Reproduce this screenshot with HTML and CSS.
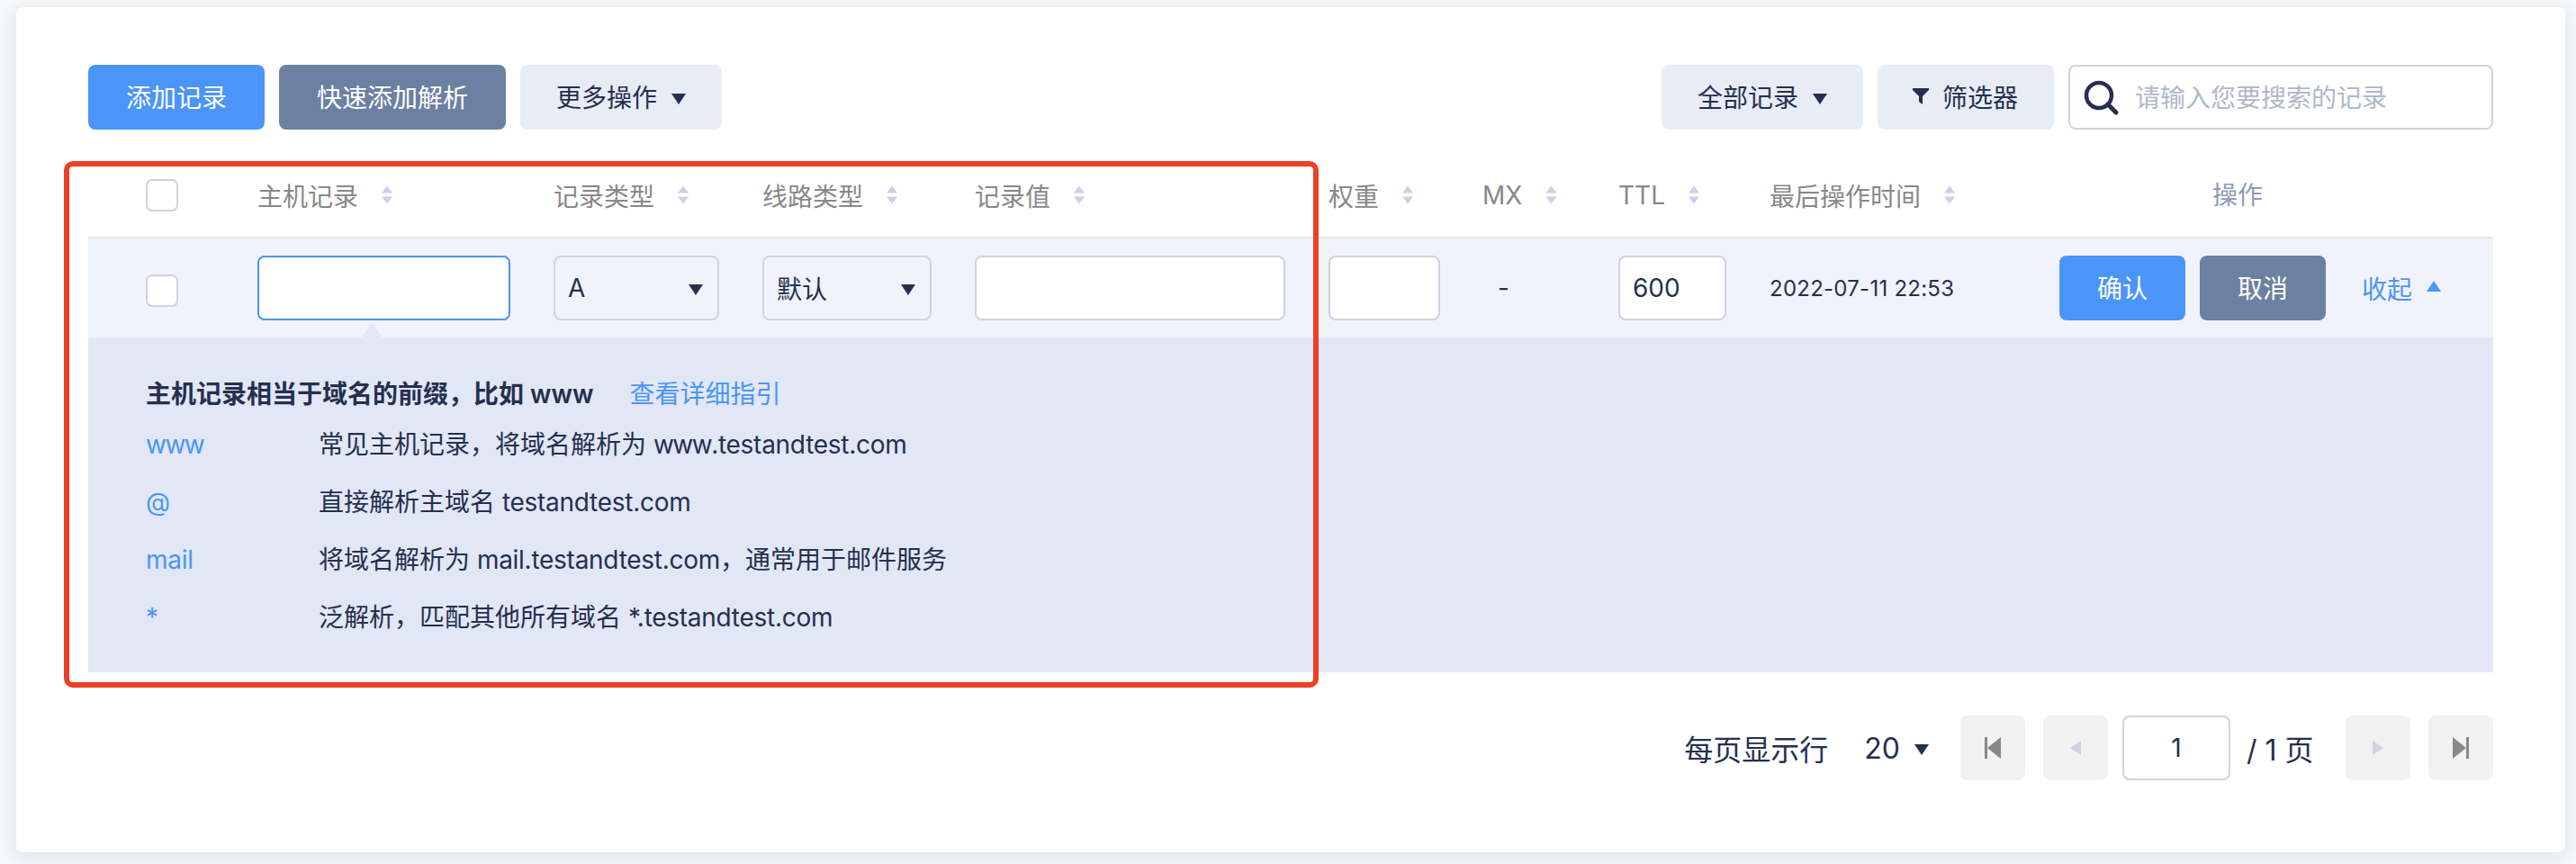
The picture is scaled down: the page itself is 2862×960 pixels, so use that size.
FILE: index.html
```
<!DOCTYPE html>
<html lang="zh-CN">
<head>
    <meta charset="UTF-8">
    <title>域名解析</title>
    <link rel="stylesheet" href="styles.css">
</head>
<body>
	<div class="card">
		<div class="toolbar">
			<button class="btn btn-primary">添加记录</button>
			<button class="btn btn-dark">快速添加解析</button>
			<button class="btn btn-light">更多操作<i class="caret"></i></button>
			<div class="toolbar-right">
				<button class="btn btn-light">全部记录<i class="caret"></i></button>
				<button class="btn btn-light btn-filter">
					<svg class="icon-filter" width="20" height="20" viewBox="0 0 20 20"><path d="M1 1h18v2l-7 7v9l-4-3v-6L1 3z" fill="#252f4f"/></svg>
					筛选器
				</button>
				<div class="search">
					<svg width="40" height="40" viewBox="0 0 40 40" fill="none" stroke="#252f4f">
						<circle cx="17" cy="17" r="14" stroke-width="4.5"/>
						<path d="M27 27l9 9" stroke-width="5" stroke-linecap="round"/>
					</svg>
					<input class="search-input" type="text" placeholder="请输入您要搜索的记录">
				</div>
			</div>
		</div>

		<div class="records">
			<div class="row row-head">
				<div><span class="checkbox"></span></div>
				<div>主机记录<i class="sort"></i></div>
				<div>记录类型<i class="sort"></i></div>
				<div>线路类型<i class="sort"></i></div>
				<div>记录值<i class="sort"></i></div>
				<div>权重<i class="sort"></i></div>
				<div>MX<i class="sort"></i></div>
				<div>TTL<i class="sort"></i></div>
				<div>最后操作时间<i class="sort"></i></div>
				<div class="head-actions">操作</div>
			</div>
			<div class="row row-edit">
				<div><span class="checkbox"></span></div>
				<div class="host-cell"><input class="field field-host" type="text"></div>
				<div><div class="field select select-type">A<i class="caret"></i></div></div>
				<div><div class="field select select-line">默认<i class="caret"></i></div></div>
				<div><input class="field field-value" type="text"></div>
				<div><input class="field field-weight" type="text"></div>
				<div class="mx">-</div>
				<div><input class="field field-ttl" type="text" value="600"></div>
				<div class="time">2022-07-11 22:53</div>
				<div class="actions">
					<button class="btn btn-primary">确认</button>
					<button class="btn btn-dark">取消</button>
					<a class="link collapse">收起<i class="caret caret-up"></i></a>
				</div>
			</div>
			<div class="guide">
				<div class="guide-title"><b>主机记录相当于域名的前缀，比如 www</b><a class="link">查看详细指引</a></div>
				<div class="guide-item"><a class="link www">www</a><span>常见主机记录，将域名解析为 <span class="www">www</span><span class="domain">.testandtest.com</span></span></div>
				<div class="guide-item"><a class="link">@</a><span>直接解析主域名 <span class="domain">testandtest.com</span></span></div>
				<div class="guide-item"><a class="link domain">mail</a><span>将域名解析为 <span class="domain">mail.testandtest.com</span>，通常用于邮件服务</span></div>
				<div class="guide-item"><a class="link">*</a><span>泛解析，匹配其他所有域名 <span class="domain">*.testandtest.com</span></span></div>
			</div>
			<div class="highlight"></div>
		</div>

		<div class="pager">
			<span class="page-label">每页显示行</span>
			<span class="page-size">20<i class="caret"></i></span>
			<button class="page-btn"><svg width="20" height="24" viewBox="0 0 20 24" fill="#888"><path d="M1 0h3v24H1zM19 0v24L4 12z"/></svg></button>
			<button class="page-btn"><svg width="12" height="16" viewBox="0 0 12 16" fill="#cfd3df"><path d="M12 0v16L0 8z"/></svg></button>
			<input class="field page-input" type="text" value="1">
			<span class="page-total">/ 1 页</span>
			<button class="page-btn"><svg width="12" height="16" viewBox="0 0 12 16" fill="#cfd3df"><path d="M0 0v16l12-8z"/></svg></button>
			<button class="page-btn"><svg width="20" height="24" viewBox="0 0 20 24" fill="#888"><path d="M16 0h3v24h-3zM1 0v24l15-12z"/></svg></button>
		</div>
	</div>
</body>
</html>
```
FILE: styles.css
```
* {
	box-sizing: border-box;
}

body {
	margin: 0;
	padding: 8px 12px 0 18px;
	height: 960px;
	overflow: hidden;
	background: #f6f8fa;
	color: #252f4f;
	font-family: Inter, "Noto Sans CJK SC", sans-serif;
	font-size: 28px;
}

button, input {
	font: inherit;
	color: inherit;
	outline: none;
}

.card {
	height: 939px;
	padding: 64px 80px 0;
	background: #fff;
	border-radius: 8px;
	box-shadow: 0 4px 20px rgba(60, 90, 120, 0.14);
}

/* buttons */
.btn {
	display: flex;
	align-items: center;
	height: 72px;
	padding: 0 42px 2px;
	border: 0;
	border-radius: 8px;
	color: #fff;
	white-space: nowrap;
}

.btn-primary {
	background: #4b95f8;
}

.btn-dark {
	background: #6c80a1;
}

.btn-light {
	padding: 0 40px 2px;
	background: #e7ecf5;
	color: #252f4f;
}

.caret {
	width: 16px;
	height: 12px;
	margin: 4px 0 0 16px;
	background: currentColor;
	clip-path: polygon(0 0, 100% 0, 50% 100%);
}

.btn .caret {
	margin-top: 6px;
}

.caret-up {
	margin-top: -4px;
	clip-path: polygon(50% 0, 100% 100%, 0 100%);
}

.link {
	color: #4b95f8;
}

/* toolbar */
.toolbar {
	display: flex;
	gap: 16px;
}

.toolbar-right {
	display: flex;
	gap: 16px;
	margin-left: auto;
}

.btn-filter {
	width: 196px;
	padding-left: 38px;
	gap: 14px;
}

.search {
	display: flex;
	align-items: center;
	width: 472px;
	height: 72px;
	padding: 2px 0 0 15px;
	border: 2px solid #cfd3df;
	border-radius: 8px;
}

.search-input {
	flex: 1;
	min-width: 0;
	padding: 0 0 0 17px;
	border: 0;
	background: none;
}

.search-input::placeholder {
	color: #adb9ca;
}

/* table */
.records {
	position: relative;
	margin-top: 28px;
}

.row {
	display: grid;
	grid-template-columns: 124px 329px 232px 236px 393px 171px 151px 168px 322px 1fr;
	align-items: center;
	padding-left: 64px;
	border-bottom: 2px solid #e5e8ed;
}

.row > div {
	display: flex;
	align-items: center;
}

.row-head {
	height: 93px;
	padding-bottom: 2px;
	color: #888;
}

.row-edit {
	height: 112px;
	background: #f0f3fb;
}

.checkbox {
	width: 36px;
	height: 36px;
	border: 2px solid #cfd3df;
	border-radius: 7px;
	background: #fff;
}

.row-edit .checkbox {
	margin-top: 6px;
}

.sort {
	width: 12px;
	height: 20px;
	margin-left: 26px;
	background: #c6d2e5;
	clip-path: polygon(50% 0, 100% 40%, 0 40%, 0 60%, 100% 60%, 50% 100%, 0 60%, 0 40%);
}

.head-actions {
	padding: 0 0 3px 170px;
	color: #8c9bb6;
}

.field {
	height: 72px;
	padding: 0 16px;
	border: 2px solid #cfd3df;
	border-radius: 8px;
	background: #fff;
}

.field-host {
	width: 281px;
	border-color: #4b95f8;
}

.select {
	display: flex;
	align-items: center;
	justify-content: space-between;
	padding-left: 14px;
	background: none;
}

.select-type {
	width: 184px;
}

.select-line {
	width: 188px;
}

.field-value {
	width: 345px;
}

.field-weight {
	width: 124px;
}

.field-ttl {
	width: 120px;
	padding: 0 14px;
}

.row-edit .mx {
	padding-left: 17px;
}

.time {
	font-size: 24px;
	letter-spacing: 0.25px;
}

.actions {
	gap: 16px;
}

.collapse {
	display: flex;
	align-items: center;
	margin-left: 24px;
}

/* host record guide */
.guide {
	height: 370px;
	padding: 41px 64px 0;
	background: #e1e7f5;
	border-bottom: 2px solid #e5e8ed;
}

.host-cell {
	position: relative;
}

.host-cell::after {
	content: "";
	position: absolute;
	left: 115px;
	bottom: -19px;
	width: 24px;
	height: 16px;
	background: #e1e7f5;
	clip-path: polygon(50% 0, 100% 100%, 0 100%);
}

.guide-title {
	display: flex;
	gap: 40px;
	line-height: 40px;
}

.guide-title b {
	font-weight: 600;
}

.guide-item {
	display: grid;
	grid-template-columns: 192px 1fr;
	height: 64px;
	line-height: 72px;
}

.domain {
	letter-spacing: -0.27px;
}

.www {
	letter-spacing: -1.5px;
}

.highlight {
	position: absolute;
	left: -27px;
	top: 7px;
	width: 1394px;
	height: 585px;
	border: 6px solid #ee4027;
	border-radius: 10px;
	pointer-events: none;
}

/* pagination */
.pager {
	display: flex;
	align-items: center;
	justify-content: flex-end;
	margin-top: 48px;
	font-size: 32px;
}

.page-size {
	display: flex;
	align-items: center;
	margin: 0 35px 0 40px;
}

.page-btn {
	display: flex;
	align-items: center;
	justify-content: center;
	width: 72px;
	height: 72px;
	padding: 0;
	border: 0;
	border-radius: 8px;
	background: #f1f1f1;
}

.page-btn + .page-btn {
	margin-left: 20px;
}

.page-input {
	width: 120px;
	margin: 0 18px 0 16px;
	font-size: 28px;
	text-align: center;
}

.page-total {
	width: 110px;
	white-space: nowrap;
}
```
